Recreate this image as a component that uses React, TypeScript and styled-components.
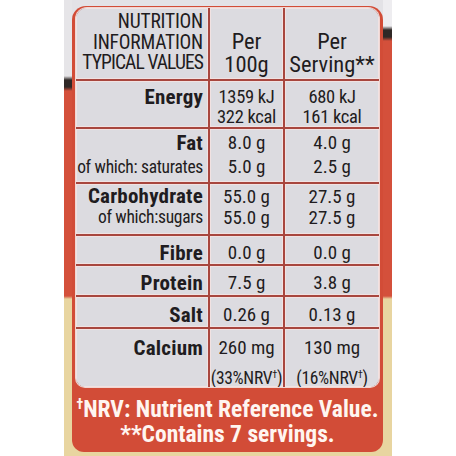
import React from "react";
import styled, { createGlobalStyle } from "styled-components";

const FONT = `"Roboto Condensed", "Liberation Sans Narrow", "DejaVu Sans Condensed", "Arial Narrow", sans-serif`;

const Global = createGlobalStyle`
  html, body { margin: 0; padding: 0; background: #ffffff; }
  body { font-family: ${FONT}; font-stretch: condensed; }
`;

const Page = styled.div`
  width: 456px;
  height: 456px;
  display: flex;
  justify-content: center;
  overflow: hidden;
  background: #ffffff;
`;

const Pack = styled.div`
  width: 328px;
  height: 456px;
  flex-shrink: 0;
  display: flex;
`;

const Strip = styled.div<{ $side: "left" | "right" }>`
  width: ${(p) => (p.$side === "left" ? 8 : 9)}px;
  flex-shrink: 0;
  background: ${(p) =>
    p.$side === "left"
      ? "linear-gradient(180deg, #e6e5e8 0 76px, #2f2826 80px 87px, #d4503b 91px 296px, #e8d5a0 299px)"
      : "linear-gradient(180deg, #eeedf0 0 26px, #2f2826 30px 37px, #d4503b 41px 296px, #e8d5a0 299px)"};
`;

const Main = styled.div`
  flex: 1;
  min-width: 0;
  display: flex;
  flex-direction: column;
  padding-top: 6px;
  background: linear-gradient(180deg, #e3e2e6 0 50%, #e8d5a0 50%);
`;

const Panel = styled.div`
  height: 446px;
  box-sizing: border-box;
  display: flex;
  flex-direction: column;
  padding: 2px 4px 0 4px;
  border-radius: 14px 14px 12px 12px;
  background: #d24c37;
  color: #1f1c20;
`;

const Table = styled.div`
  display: grid;
  grid-template-columns: 132px 73px 94px;
  grid-template-rows: 71px 46px 53px 50px 28px 29px 30px 58px;
  gap: 2px;
  background: #a8463e;
  border-radius: 11px 11px 9px 9px;
  box-shadow: 0 0 0 1px #f0d6d2;
  overflow: hidden;
`;

const Cell = styled.div<{ $align: "end" | "center"; $pt: number }>`
  display: flex;
  flex-direction: column;
  align-items: ${(p) => (p.$align === "end" ? "flex-end" : "center")};
  padding: ${(p) => p.$pt}px ${(p) => (p.$align === "end" ? 5 : 0)}px 0 0;
  background: #dcdbe0;
  box-shadow: inset 0 0 0 1px #f1e2e2;
  white-space: nowrap;
`;

const HeadLine = styled.span<{ $tight?: boolean }>`
  font-size: 19.5px;
  line-height: 20.5px;
  font-weight: 400;
  letter-spacing: ${(p) => (p.$tight ? -0.9 : -0.2)}px;
`;

const PerLine = styled.span`
  font-size: 22.5px;
  line-height: 23px;
  font-weight: 400;
`;

const sizes = { main: 21, sub: 17.5, value: 19, energy: 18.5, small: 17.5 };
const spacing = { main: 0.2, sub: -0.3, value: 0, energy: -0.3, small: -0.3 };

type Kind = keyof typeof sizes;

const Line = styled.span<{ $kind: Kind; $lh: number }>`
  line-height: ${(p) => p.$lh}px;
  font-size: ${(p) => sizes[p.$kind]}px;
  font-weight: ${(p) => (p.$kind === "main" ? 700 : 400)};
  letter-spacing: ${(p) => spacing[p.$kind]}px;
`;

const Sup = styled.sup`
  font-size: 0.6em;
  line-height: 0;
  vertical-align: 0.55em;
`;

const Footer = styled.div`
  flex: 1;
  display: flex;
  flex-direction: column;
  align-items: center;
  padding-top: 10px;
  color: #fff5f0;
  font-weight: 700;
  font-size: 23.5px;
  line-height: 25px;
  letter-spacing: 0;
  white-space: nowrap;
`;

type Row = {
  label: { t: string; main?: boolean }[];
  v1: React.ReactNode[];
  v2: React.ReactNode[];
  lh: number;
  pt: number;
  kind: Kind;
  second?: Kind;
};

const nrv = (pct: string) => (
  <>
    ({pct}%NRV<Sup>†</Sup>)
  </>
);

const rows: Row[] = [
  {
    label: [{ t: "Energy", main: true }],
    v1: ["1359 kJ", "322 kcal"],
    v2: ["680 kJ", "161 kcal"],
    lh: 20,
    pt: 6,
    kind: "energy",
  },
  {
    label: [{ t: "Fat", main: true }, { t: "of which: saturates" }],
    v1: ["8.0 g", "5.0 g"],
    v2: ["4.0 g", "2.5 g"],
    lh: 24,
    pt: 2,
    kind: "value",
  },
  {
    label: [{ t: "Carbohydrate", main: true }, { t: "of which:sugars" }],
    v1: ["55.0 g", "55.0 g"],
    v2: ["27.5 g", "27.5 g"],
    lh: 21,
    pt: 2,
    kind: "value",
  },
  { label: [{ t: "Fibre", main: true }], v1: ["0.0 g"], v2: ["0.0 g"], lh: 20, pt: 7, kind: "value" },
  { label: [{ t: "Protein", main: true }], v1: ["7.5 g"], v2: ["3.8 g"], lh: 20, pt: 7, kind: "value" },
  { label: [{ t: "Salt", main: true }], v1: ["0.26 g"], v2: ["0.13 g"], lh: 20, pt: 8, kind: "value" },
  {
    label: [{ t: "Calcium", main: true }],
    v1: ["260 mg", nrv("33")],
    v2: ["130 mg", nrv("16")],
    lh: 30,
    pt: 4,
    kind: "value",
    second: "small",
  },
];

export default function App() {
  return (
    <>
      <Global />
      <Page>
        <Pack>
          <Strip $side="left" />
          <Main>
            <Panel>
              <Table>
                <Cell $align="end" $pt={4}>
                  <HeadLine>NUTRITION</HeadLine>
                  <HeadLine>INFORMATION</HeadLine>
                  <HeadLine $tight>TYPICAL VALUES</HeadLine>
                </Cell>
                <Cell $align="center" $pt={22}>
                  <PerLine>Per</PerLine>
                  <PerLine>100g</PerLine>
                </Cell>
                <Cell $align="center" $pt={22}>
                  <PerLine>Per</PerLine>
                  <PerLine>Serving**</PerLine>
                </Cell>
                {rows.map((r, i) => (
                  <React.Fragment key={i}>
                    <Cell $align="end" $pt={r.pt}>
                      {r.label.map((l, j) => (
                        <Line key={j} $kind={l.main ? "main" : "sub"} $lh={r.lh}>
                          {l.t}
                        </Line>
                      ))}
                    </Cell>
                    {[r.v1, r.v2].map((vals, c) => (
                      <Cell key={c} $align="center" $pt={r.pt}>
                        {vals.map((v, j) => (
                          <Line key={j} $kind={j === 1 && r.second ? r.second : r.kind} $lh={r.lh}>
                            {v}
                          </Line>
                        ))}
                      </Cell>
                    ))}
                  </React.Fragment>
                ))}
              </Table>
              <Footer>
                <span>
                  <Sup>†</Sup>NRV: Nutrient Reference Value.
                </span>
                <span>**Contains 7 servings.</span>
              </Footer>
            </Panel>
          </Main>
          <Strip $side="right" />
        </Pack>
      </Page>
    </>
  );
}
